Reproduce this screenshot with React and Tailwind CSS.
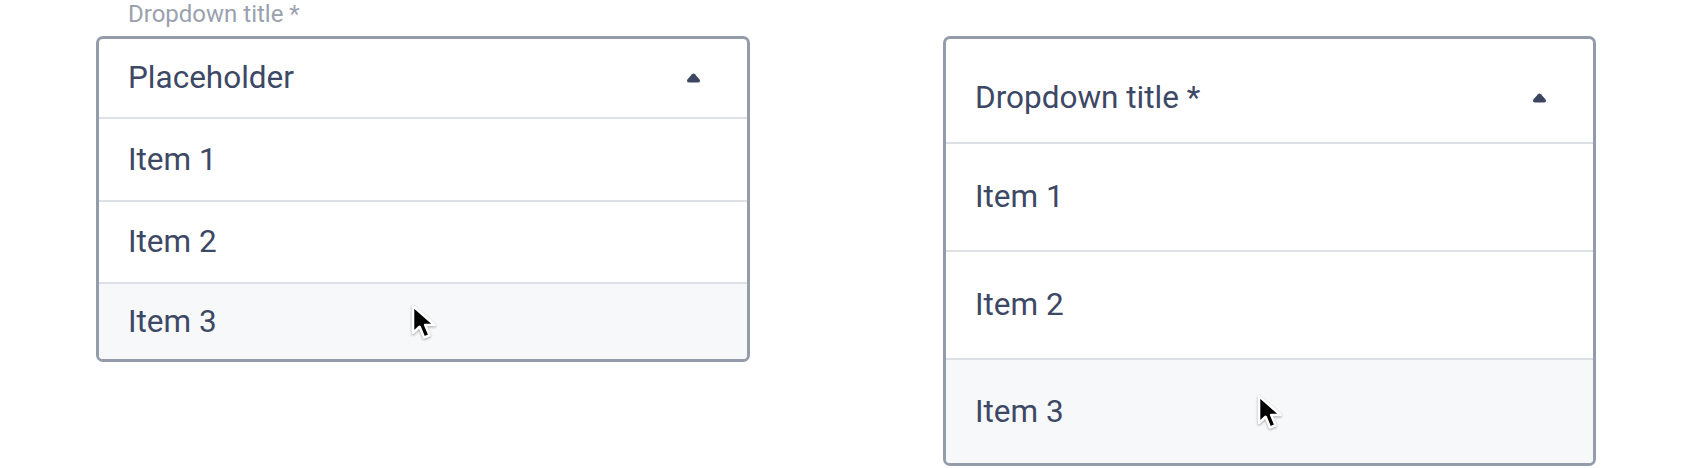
import React from 'react'

const font = { fontFamily: 'Roboto, "Noto Sans", sans-serif' }

function Caret() {
  return (
    <svg width="15" height="10" viewBox="0 0 15 10">
      <path d="M6 1.2 Q7.5 -0.2 9 1.2 L13.6 6.4 Q15 9.5 11.5 9.5 L3.5 9.5 Q0 9.5 1.4 6.4 Z" fill="#3c4660" />
    </svg>
  )
}

// mouse pointer drawn over the hovered row
function Pointer({ className }) {
  return (
    <svg className={className} width="30" height="38" viewBox="0 0 30 38" style={{ filter: 'drop-shadow(0 1px 1px rgba(0,0,0,0.35))' }}>
      <path
        d="M2 2 L2 29 L8.6 22.8 L13 33.6 L18.6 31.2 L14.2 21 L23.6 21 Z"
        fill="#000"
        stroke="#fff"
        strokeWidth="2.6"
        strokeLinejoin="round"
      />
    </svg>
  )
}

function Dropdown({ title, header, rows, headerPad, cursor }) {
  return (
    <div className="rounded-[7px] border-[3px] border-[#949cab] bg-white overflow-hidden text-[31.5px] text-[#3d4865]">
      <div className={`flex items-center justify-between pl-[29px] pr-[46px] ${header} ${headerPad}`}>
        <span>{title}</span>
        <Caret />
      </div>
      {rows.map((r, i) => (
        <div
          key={r.label}
          className={`relative flex items-center pl-[29px] border-t-2 border-[#dde1e6] ${r.h} ${i === rows.length - 1 ? 'bg-[#f7f8fa]' : ''}`}
        >
          <span>{r.label}</span>
          {i === rows.length - 1 && <Pointer className={cursor} />}
        </div>
      ))}
    </div>
  )
}

export default function App() {
  return (
    <div className="flex items-start gap-[193px] pl-[96px] h-[468px] bg-white leading-none" style={font}>
      <div className="w-[654px]">
        <div className="h-[36px] pl-[32px] pt-[2px] text-[24px] leading-[24px] text-[#9aa1ae]">Dropdown title *</div>
        <Dropdown
          title="Placeholder"
          header="h-[78px]"
          headerPad=""
          cursor="absolute left-[312px] top-[20px]"
          rows={[
            { label: 'Item 1', h: 'h-[83px]' },
            { label: 'Item 2', h: 'h-[82px]' },
            { label: 'Item 3', h: 'h-[77px]' },
          ]}
        />
      </div>
      <div className="w-[653px] mt-[36px]">
        <Dropdown
          title="Dropdown title *"
          header="h-[103px]"
          headerPad="pt-[14px]"
          cursor="absolute left-[311px] top-[34px]"
          rows={[
            { label: 'Item 1', h: 'h-[108px]' },
            { label: 'Item 2', h: 'h-[108px]' },
            { label: 'Item 3', h: 'h-[105px]' },
          ]}
        />
      </div>
    </div>
  )
}
